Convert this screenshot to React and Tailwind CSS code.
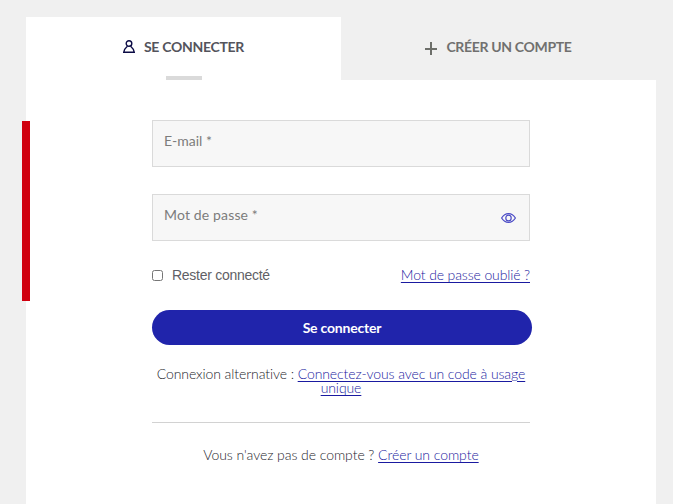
import React from 'react';

function UserIcon() {
  return (
    <svg width="12" height="13" viewBox="0 0 12 13" fill="none" stroke="#0b0b45" strokeWidth="1.4">
      <ellipse cx="6" cy="3.5" rx="2.8" ry="2.8" />
      <path d="M4.4 6.3 C3.8 7.6 1.4 7.6 0.7 12.3 H11.3 C10.6 7.6 8.2 7.6 7.6 6.3" />
    </svg>
  );
}

function PlusIcon() {
  return (
    <svg width="12" height="13" viewBox="0 0 12 13" fill="#6d6f6a" shapeRendering="crispEdges">
      <path d="M5 0h2v13H5z" />
      <path d="M0 6h12v2H0z" />
    </svg>
  );
}

function EyeIcon() {
  return (
    <svg width="15" height="10" viewBox="0 0 15 10" fill="none" stroke="#4b4bc6" strokeWidth="1.2">
      <path d="M0.6 5 C2.4 2 4.7 0.6 7.5 0.6 S12.6 2 14.4 5 C12.6 8 10.3 9.4 7.5 9.4 S2.4 8 0.6 5 Z" />
      <ellipse cx="7.5" cy="5" rx="2.7" ry="2.9" />
    </svg>
  );
}

function Link({ className = '', children }) {
  return (
    <a href="#" className={`text-[#1a1aa0] underline decoration-1 underline-offset-2 ${className}`}>
      {children}
    </a>
  );
}

export default function App() {
  return (
    <main className="h-screen overflow-hidden bg-[#f0f0f0] pt-[17px] pl-[26px] font-['Lato',sans-serif] text-sm font-light text-[#25252c]">
      <div className="relative w-[630px]">
        <nav className="grid h-[63px] grid-cols-2 font-bold">
          <button className="flex flex-col items-center bg-white text-[#54545c]">
            <span className="flex h-[59px] items-center gap-[9px]">
              <UserIcon />
              <span className="pt-px text-[14px] leading-5 tracking-[-0.3px]">SE CONNECTER</span>
            </span>
            <span className="h-1 w-9 bg-[#dadada]" />
          </button>
          <button className="flex h-[59px] items-center justify-center gap-[9px] text-[#70706f]">
            <span className="pt-[3px]">
              <PlusIcon />
            </span>
            <span className="pt-px text-[14px] leading-5 tracking-[-0.33px]">CRÉER UN COMPTE</span>
          </button>
        </nav>

        <span className="absolute top-[104px] -left-1 h-[180px] w-2 bg-[#d0000f]" />

        <form className="flex h-[424px] flex-col bg-white px-[126px] pt-10">
          <div className="h-[47px] border border-[#dadada] bg-[#f7f7f7] px-[11px] pt-2.5 font-normal text-[#7c7c7c]">
            <label className="block leading-5">E-mail *</label>
          </div>
          <div className="mt-[27px] flex h-[47px] justify-between border border-[#dadada] bg-[#f7f7f7] pt-2.5 pr-[13px] pl-[11px] font-normal text-[#7c7c7c]">
            <label className="block leading-5 tracking-[0.15px]">Mot de passe *</label>
            <span className="pt-2">
              <EyeIcon />
            </span>
          </div>

          <div className="mt-6 flex h-5 items-center justify-between">
            <label className="flex items-center gap-[9px] font-['Liberation_Sans',sans-serif] font-normal text-[#5f5f66]">
              <input type="checkbox" className="m-0 h-[11px] w-[11px]" />
              <span className="tracking-[-0.28px]">Rester connecté</span>
            </label>
            <Link className="tracking-[-0.12px]">Mot de passe oublié ?</Link>
          </div>

          <button type="button" className="mt-[25px] h-[35px] w-[380px] shrink-0 rounded-full bg-[#2024ab] font-bold tracking-[-0.2px] text-white">
            Se connecter
          </button>

          <p className="mt-[22px] text-center leading-[14px] tracking-[-0.09px] whitespace-nowrap">
            Connexion alternative : <Link>Connectez-vous avec un code à usage</Link>
            <br />
            <Link>unique</Link>
          </p>

          <hr className="mt-[27px] border-[#d2d2d2]" />

          <p className="mt-[22px] text-center leading-5 tracking-[-0.06px]">
            Vous n'avez pas de compte ? <Link>Créer un compte</Link>
          </p>
        </form>
      </div>
    </main>
  );
}
